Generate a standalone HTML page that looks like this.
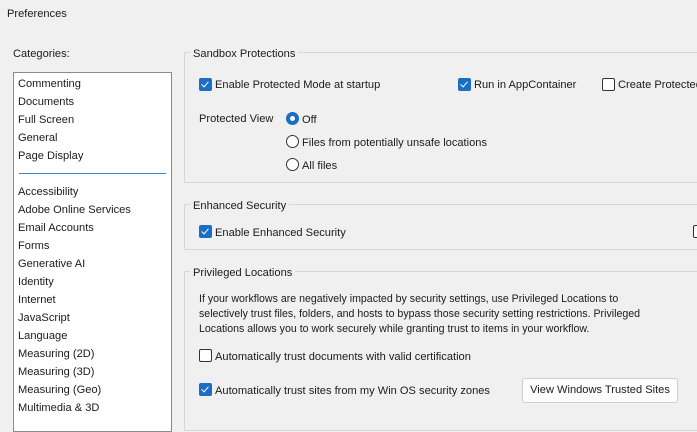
<!DOCTYPE html>
<html><head><meta charset="utf-8"><style>
*{margin:0;padding:0;box-sizing:border-box}
body{width:697px;height:416px;background:#f0f0f0;font-family:"Liberation Sans",sans-serif;font-size:11.1px;color:#1b1b1b;position:relative;overflow:hidden}
.a{position:absolute;white-space:nowrap;line-height:14px;margin-top:1px}
.list{position:absolute;left:13px;top:72px;width:159px;height:360px;background:#fff;border:1px solid #8a8a8a}
.gb{position:absolute;border:1px solid #d7d7d7;border-right:none}
.gt{position:absolute;background:#f0f0f0;padding:0 3px;line-height:14px;margin-top:1px}
.cb{position:absolute;width:13px;height:13px;border-radius:2px}
.on{background:#1a6ec3}
.on::after{content:"";position:absolute;left:4px;top:2px;width:3px;height:6px;border:solid #fff;border-width:0 1.3px 1.3px 0;transform:rotate(40deg)}
.off{border:1px solid #333;background:#fff}
.rb{position:absolute;width:13px;height:13px;border-radius:50%;border:1px solid #333;background:#fff}
.rbon{background:#fff;border:4px solid #1a6ec3}
.btn{position:absolute;left:522px;top:378px;width:156px;height:25px;border:1px solid #cfcfcf;border-radius:3px;background:#fdfdfd;text-align:center;line-height:23px}
</style></head><body>
<div class="a" style="left:7px;top:6px">Preferences</div>
<div class="a" style="left:13px;top:46px">Categories:</div>
<div class="list"></div>
<div class="a" style="left:18px;top:76px">Commenting</div>
<div class="a" style="left:18px;top:94px">Documents</div>
<div class="a" style="left:18px;top:112px">Full Screen</div>
<div class="a" style="left:18px;top:130px">General</div>
<div class="a" style="left:18px;top:148px">Page Display</div>
<div style="position:absolute;left:19px;top:173px;width:147px;height:1px;background:#3a86c8"></div>
<div class="a" style="left:18px;top:184px">Accessibility</div>
<div class="a" style="left:18px;top:202px">Adobe Online Services</div>
<div class="a" style="left:18px;top:220px">Email Accounts</div>
<div class="a" style="left:18px;top:238px">Forms</div>
<div class="a" style="left:18px;top:256px">Generative AI</div>
<div class="a" style="left:18px;top:274px">Identity</div>
<div class="a" style="left:18px;top:292px">Internet</div>
<div class="a" style="left:18px;top:310px">JavaScript</div>
<div class="a" style="left:18px;top:328px">Language</div>
<div class="a" style="left:18px;top:346px">Measuring (2D)</div>
<div class="a" style="left:18px;top:364px">Measuring (3D)</div>
<div class="a" style="left:18px;top:382px">Measuring (Geo)</div>
<div class="a" style="left:18px;top:400px">Multimedia &amp; 3D</div>

<div class="gb" style="left:184px;top:52px;width:520px;height:131px"></div>
<div class="gt" style="left:190px;top:46px">Sandbox Protections</div>
<div class="cb on" style="left:199px;top:78px"></div>
<div class="a" style="left:215px;top:77px">Enable Protected Mode at startup</div>
<div class="cb on" style="left:458px;top:78px"></div>
<div class="a" style="left:474px;top:77px">Run in AppContainer</div>
<div class="cb off" style="left:602px;top:78px"></div>
<div class="a" style="left:618px;top:77px">Create Protected</div>
<div class="a" style="left:199px;top:111px">Protected View</div>
<div class="rb rbon" style="left:286px;top:112px"></div>
<div class="a" style="left:302px;top:112px">Off</div>
<div class="rb" style="left:286px;top:135px"></div>
<div class="a" style="left:302px;top:135px">Files from potentially unsafe locations</div>
<div class="rb" style="left:286px;top:158px"></div>
<div class="a" style="left:302px;top:158px">All files</div>

<div class="gb" style="left:184px;top:204px;width:520px;height:46px"></div>
<div class="gt" style="left:190px;top:198px">Enhanced Security</div>
<div class="cb on" style="left:199px;top:225px"></div>
<div class="a" style="left:215px;top:225px">Enable Enhanced Security</div>
<div class="cb off" style="left:693px;top:225px"></div>

<div class="gb" style="left:184px;top:271px;width:520px;height:160px"></div>
<div class="gt" style="left:190px;top:265px">Privileged Locations</div>
<div class="a" style="left:199px;top:291px;line-height:15px;font-size:10.6px">If your workflows are negatively impacted by security settings, use Privileged Locations to<br>selectively trust files, folders, and hosts to bypass those security setting restrictions. Privileged<br>Locations allows you to work securely while granting trust to items in your workflow.</div>
<div class="cb off" style="left:199px;top:349px"></div>
<div class="a" style="left:215px;top:349px">Automatically trust documents with valid certification</div>
<div class="cb on" style="left:199px;top:383px"></div>
<div class="a" style="left:215px;top:383px">Automatically trust sites from my Win OS security zones</div>
<div class="btn">View Windows Trusted Sites</div>
</body></html>
